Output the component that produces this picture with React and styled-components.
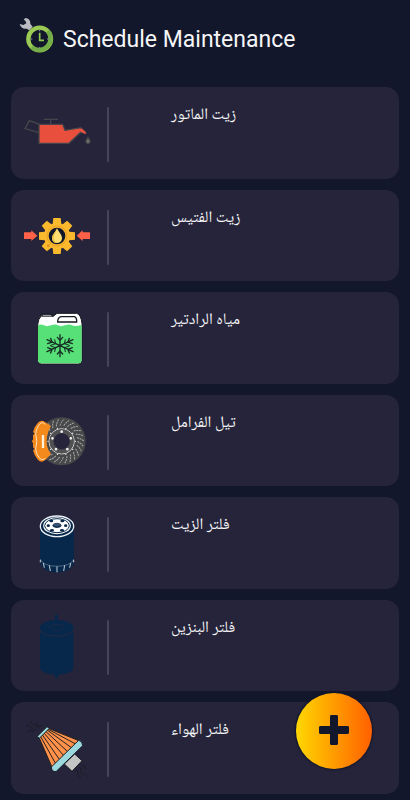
import React from "react";
import styled, { createGlobalStyle } from "styled-components";

const GlobalStyle = createGlobalStyle`
  *, *::before, *::after { box-sizing: border-box; }
  body {
    margin: 0;
    background: #12172b;
    color: #f5f5f7;
    font-family: Roboto, "Noto Sans", "DejaVu Sans", sans-serif;
  }
`;

const Page = styled.main`
  display: flex;
  flex-direction: column;
  min-height: 100vh;
  padding: 0 11px 6px;
`;

const Header = styled.header`
  display: flex;
  align-items: center;
  gap: 7px;
  height: 87px;
  padding: 0 8px 8px;
`;

const Logo = styled.svg`
  flex: none;
  width: 37px;
  height: 46px;
`;

const Title = styled.h1`
  margin: 0;
  font-size: 23px;
  line-height: 32px;
  font-weight: 400;
  white-space: nowrap;
`;

const List = styled.ul`
  flex: 1;
  display: grid;
  grid-auto-rows: minmax(91px, 1fr);
  gap: 11px;
  margin: 0;
  padding: 0;
  list-style: none;
`;

const Card = styled.li`
  display: flex;
  align-items: flex-start;
  padding: 5px 6px;
  border-radius: 13px;
  background: #25243a;
`;

const Picture = styled.svg`
  flex: none;
  width: 80px;
  height: 80px;
`;

const Divider = styled.span`
  flex: none;
  width: 2px;
  height: 55px;
  margin: 15px 62px 0 10px;
  border-radius: 1px;
  background: #45445b;
`;

const Name = styled.h2`
  margin: 12px 0 0;
  font-family: "Noto Naskh Arabic", "DejaVu Sans", sans-serif;
  font-size: 16px;
  line-height: 24px;
  font-weight: 400;
  white-space: nowrap;
`;

const AddButton = styled.button`
  position: fixed;
  right: 38px;
  bottom: 31px;
  display: grid;
  place-items: center;
  width: 76px;
  height: 76px;
  padding: 0 0 3px;
  border: 0;
  border-radius: 50%;
  background: linear-gradient(90deg, #ffd700, #ff6000);
  box-shadow: 0 0 2px 1px #10152a;
  cursor: pointer;
`;

const OilCan = () => (
  <Picture viewBox="51 36 240 240" aria-hidden="true">
    <g fill="none" stroke="#45454b" strokeWidth="4">
      <path d="M117 158 L75 146 L88 122 L117 132 M131 118 H174 M152 118 V132" />
      <path fill="#e94f3d" d="M117 133 H188 L195 151 L243 143 L256 160 L242 157 L207 190 H117 Z" />
    </g>
    <path d="M244 145 L257 155 V163 L242 155 Z" fill="#e94f3d" />
    <path d="M264 169 C268 178 273 180 272 186 C270 194 258 194 256 186 C255 180 260 178 264 169 Z" fill="#4b4b4d" />
    <path d="M264 177 C268 183 269 188 264 188 C259 188 260 183 264 177 Z" fill="#77756f" />
  </Picture>
);

const GearOil = () => (
  <Picture viewBox="51 30 240 240" aria-hidden="true">
    <g fill="#fbb92d">
      {[0, 45, 90, 135].map((a) => (
        <path
          key={a}
          transform={`rotate(${a} 171 153)`}
          d="M160 99 H182 L184 116 V190 L182 207 H160 L158 190 V116 Z"
        />
      ))}
      <circle cx="171" cy="153" r="39" />
    </g>
    <circle cx="171" cy="153" r="30" fill="none" stroke="#e9a128" strokeWidth="3" />
    <circle cx="171" cy="153" r="25" fill="#11172b" />
    <path d="M171 130 C176 141 187 150 186 161 C184 178 158 178 156 161 C155 150 167 141 171 130 Z" fill="#ffe071" />
    <path d="M171 130 C168 143 158 153 162 165 C165 171 170 174 177 172 C167 178 157 171 156 161 C155 150 167 141 171 130 Z" fill="#e8bd45" />
    <circle cx="145" cy="182" r="4" fill="#d99224" />
    <g fill="#ff6048">
      <path d="M72 142 H94 V136 L112 152 L94 168 V162 H72 Z" />
      <path d="M270 142 H248 V136 L230 152 L248 168 V162 H270 Z" />
    </g>
  </Picture>
);

const Coolant = () => (
  <Picture viewBox="51 28 240 240" aria-hidden="true">
    <path
      d="M113 112 Q115 92 123 86 V79 H158 V87 L171 77 H230 Q243 80 246 108 V218 Q246 229 235 229 H124 Q113 229 113 218 Z"
      fill="#fff"
      stroke="#17191d"
      strokeWidth="3"
    />
    <path
      d="M114 112 Q124 108 132 113 T153 113 T174 113 T195 113 T216 113 T245 112 V216 Q245 227 234 227 H125 Q114 227 114 216 Z"
      fill="#58e078"
    />
    <path d="M124 79 H158 V87 H124 Z" fill="#17191d" />
    <path d="M128 83 H154" stroke="#fff" strokeWidth="2" />
    <path d="M183 87 H223 Q231 90 230 103 H173 Q173 90 183 87 Z" fill="#fff" stroke="#17191d" strokeWidth="4" />
    <g stroke="#152b23" strokeWidth="4" strokeLinecap="round" fill="none">
      <path d="M180 141 V207 M141 156 L219 192 M219 156 L141 192" />
      <path d="M172 149 L180 158 L188 149 M172 199 L180 190 L188 199" />
      <path d="M152 152 L156 163 L143 168 M208 152 L204 163 L217 168 M152 196 L156 185 L143 180 M208 196 L204 185 L217 180" />
      <path d="M164 156 L167 168 L152 173 M196 156 L193 168 L208 173 M164 192 L167 180 L152 175 M196 192 L193 180 L208 175" strokeWidth="3" />
    </g>
  </Picture>
);

const Brake = () => (
  <Picture viewBox="51 29 240 240" aria-hidden="true">
    <circle cx="185" cy="153" r="48" fill="none" stroke="#47484a" strokeWidth="48" />
    <g stroke="#aaa9a8" strokeWidth="3" fill="none" strokeDasharray="6 2">
      {Array.from({ length: 26 }, (_, i) => (
        <path key={i} transform={`rotate(${i * (360 / 26)} 185 153)`} d="M180 106 Q184 94 193 86" />
      ))}
    </g>
    <circle cx="185" cy="153" r="38" fill="none" stroke="#d2d1d1" strokeWidth="3" />
    <circle cx="185" cy="153" r="31" fill="none" stroke="#515154" strokeWidth="10" />
    <g fill="#f1f0ef">
      {[0, 72, 144, 216, 288].map((a) => (
        <circle key={a} transform={`rotate(${a} 185 153)`} cx="185" cy="124" r="4" />
      ))}
      {Array.from({ length: 10 }, (_, i) => (
        <circle key={i} transform={`rotate(${i * 36 + 18} 185 153)`} cx="185" cy="112" r="2" />
      ))}
    </g>
    <path
      d="M115 96 Q124 88 134 94 L153 107 Q140 129 140 153 Q140 176 153 191 L135 210 Q124 219 114 209 Q102 196 99 180 L104 176 L99 171 V158 L95 153 L99 148 V134 L104 130 L99 125 Q104 107 115 96 Z"
      fill="#f4891c"
    />
    <path
      d="M136 102 Q124 91 116 105 Q108 118 107 130 Q114 153 107 176 Q108 188 116 200 Q124 213 136 204"
      fill="none"
      stroke="#ffe2bb"
      strokeWidth="3"
    />
    <path d="M129 134 V173" stroke="#fff0d9" strokeWidth="7" />
  </Picture>
);

const OilFilter = () => (
  <Picture viewBox="51 30 240 240" aria-hidden="true">
    <path d="M120 103 V209 C125 252 217 252 222 209 V103 Z" fill="#07284b" />
    <path d="M121 201 C128 230 214 230 221 201" fill="none" stroke="#73879c" strokeWidth="2" />
    <path
      d="M121 204 V211 M130 213 L133 227 M148 220 L151 237 M171 223 V241 M194 220 L191 237 M212 213 L209 227 M221 204 V211"
      fill="none"
      stroke="#c3ced9"
      strokeWidth="3"
    />
    <ellipse cx="171" cy="103" rx="50" ry="31" fill="#07284b" stroke="#edf1f5" strokeWidth="4" />
    <ellipse cx="171" cy="101" rx="38" ry="22" fill="#fff" stroke="#fff" strokeWidth="7" />
    <ellipse cx="171" cy="101" rx="37" ry="21" fill="#fff" stroke="#07284b" strokeWidth="3" />
    <ellipse cx="171" cy="100" rx="13" ry="8" fill="#38516c" />
    <path d="M158 101 Q170 110 184 101" stroke="#07284b" strokeWidth="3" fill="none" />
    <g fill="#07284b">
      <ellipse cx="154" cy="87" rx="6" ry="4" />
      <ellipse cx="187" cy="87" rx="6" ry="4" />
      <ellipse cx="145" cy="101" rx="5" ry="4" />
      <ellipse cx="197" cy="101" rx="5" ry="4" />
      <ellipse cx="156" cy="115" rx="6" ry="4" />
      <ellipse cx="186" cy="115" rx="6" ry="4" />
    </g>
  </Picture>
);

const FuelFilter = () => (
  <Picture viewBox="51 30 240 240" aria-hidden="true">
    <path d="M165 59 H174 V78 H165 Z M165 235 H174 V250 H165 Z" fill="#07284b" />
    <path d="M120 97 V220 C127 246 214 246 220 220 V97 Z" fill="#07284b" />
    <path d="M120 99 V104 C129 129 211 129 220 104 V99" fill="none" stroke="#202943" strokeWidth="4" />
    <ellipse cx="170" cy="97" rx="50" ry="22" fill="#07284b" />
    <path
      d="M157 88 Q145 92 150 98 M183 88 Q195 92 190 98 M154 101 Q170 113 186 101 M157 91 Q170 86 183 91"
      fill="none"
      stroke="#222943"
      strokeWidth="2"
    />
  </Picture>
);

const AirFilter = () => (
  <Picture viewBox="51 30 240 240" aria-hidden="true">
    <g fill="none" stroke="#17191f" strokeWidth="2">
      <path d="M78 88 Q88 80 92 91 T110 99 M94 71 Q91 81 101 83 T120 93 M82 105 Q94 95 101 108 M111 75 Q104 82 115 85 L125 88" />
      <path d="M226 218 Q236 220 233 229 T243 243 M237 211 Q246 211 243 221 T253 233 M247 205 Q258 207 255 216 M255 231 Q263 233 261 243" />
    </g>
    <path d="M117 121 L145 94 L239 132 L157 213 Z" fill="#ff914b" stroke="#25201d" strokeWidth="3" />
    <path
      d="M121 117 L168 202 M126 112 L180 190 M131 107 L193 178 M136 102 L205 166 M140 98 L217 154 M143 96 L229 142"
      stroke="#25201d"
      strokeWidth="3"
    />
    <path d="M112 118 L141 89 L148 94 L118 124 Z" fill="#9bd9df" stroke="#1b1e22" strokeWidth="3" />
    <path d="M193 201 L224 171 L246 191 L216 223 Z" fill="#c4c6c6" stroke="#1b1e22" strokeWidth="3" />
    <path
      d="M154 210 L236 130 Q248 132 248 146 L168 224 Q154 224 154 210 Z"
      fill="#9bd9df"
      stroke="#1b1e22"
      strokeWidth="3"
    />
  </Picture>
);

const parts = [
  { name: "زيت الماتور", Icon: OilCan },
  { name: "زيت الفتيس", Icon: GearOil },
  { name: "مياه الرادتير", Icon: Coolant },
  { name: "تيل الفرامل", Icon: Brake },
  { name: "فلتر الزيت", Icon: OilFilter },
  { name: "فلتر البنزين", Icon: FuelFilter },
  { name: "فلتر الهواء", Icon: AirFilter },
];

export default function App() {
  return (
    <Page>
      <GlobalStyle />
      <Header>
        <Logo viewBox="57 46 111 138" aria-hidden="true">
          <path
            d="M76 49 Q92 51 91 67 L98 75 L88 86 L80 81 Q64 84 59 67 L70 70 L79 65 L76 57 L71 54 Z"
            fill="#b9bbc1"
          />
          <circle cx="119" cy="112" r="34" fill="none" stroke="#9bcb54" strokeWidth="13" />
          <path d="M143 88 A34 34 0 0 1 95 136" fill="none" stroke="#72ad47" strokeWidth="13" />
          <path d="M119 93 V116 H132" fill="none" stroke="#8fc951" strokeWidth="5" />
          <path d="M119 85 V89 M119 136 V140 M92 112 H97 M141 112 H146" stroke="#8a95a5" strokeWidth="3" />
        </Logo>
        <Title>Schedule Maintenance</Title>
      </Header>
      <List>
        {parts.map(({ name, Icon }) => (
          <Card key={name}>
            <Icon />
            <Divider />
            <Name lang="ar" dir="rtl">
              {name}
            </Name>
          </Card>
        ))}
      </List>
      <AddButton type="button" aria-label="Add maintenance">
        <svg width="30" height="30" viewBox="0 0 30 30" aria-hidden="true">
          <path
            d="M12 0 H18 Q19 0 19 2 V11 H28 Q30 11 30 12 V18 Q30 19 28 19 H19 V28 Q19 30 18 30 H12 Q11 30 11 28 V19 H2 Q0 19 0 18 V12 Q0 11 2 11 H11 V2 Q11 0 12 0 Z"
            fill="#12172b"
          />
        </svg>
      </AddButton>
    </Page>
  );
}
